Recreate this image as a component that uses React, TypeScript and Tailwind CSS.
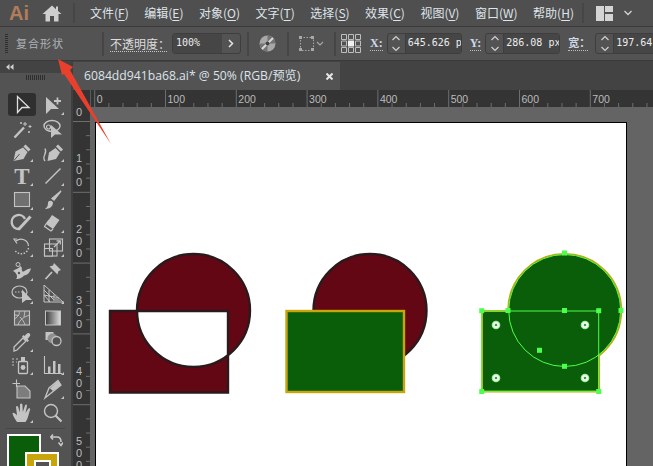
import type { ReactNode } from "react";

const uiFont = "font-['Noto_Sans_CJK_SC','Noto_Sans',sans-serif]";
const G = "#c4c4c4";

const menus = [
  ["文件(", "F", ")"],
  ["编辑(", "E", ")"],
  ["对象(", "O", ")"],
  ["文字(", "T", ")"],
  ["选择(", "S", ")"],
  ["效果(", "C", ")"],
  ["视图(", "V", ")"],
  ["窗口(", "W", ")"],
  ["帮助(", "H", ")"],
];

function Flyout() {
  return <polygon points="23,19 23,22 20,22" fill={G} />;
}

// toolbar icons, 24 box centred on the cell
const tools: { icon: ReactNode; fly?: boolean; active?: boolean }[] = [
  { active: true, icon: <path d="M7.5 3.5V19.5L12 14.5H19Z" fill="none" stroke="#e0e0e0" strokeWidth="1.3" /> },
  {
    fly: true,
    icon: (
      <>
        <path d="M5 4V21L10 16H18Z" fill={G} />
        <path d="M13 8H20M16.5 4.5V11.5" stroke={G} strokeWidth="1.8" />
      </>
    ),
  },
  {
    icon: (
      <>
        <path d="M4.5 20.5L14 10.5" stroke={G} strokeWidth="2.4" />
        <path d="M15 5v4M13 7h4M20 8v3M18.5 9.5h3M11 5v2M10 6h2M19 14v2M18 15h2" stroke={G} strokeWidth="1" />
      </>
    ),
  },
  {
    icon: (
      <>
        <ellipse cx="11" cy="9" rx="8" ry="5.5" fill="none" stroke={G} strokeWidth="1.4" />
        <circle cx="7.5" cy="10" r="2" fill="none" stroke={G} strokeWidth="1.2" />
        <path d="M10 8V21L14 17.5H21Z" fill={G} />
      </>
    ),
  },
  {
    fly: true,
    icon: (
      <>
        <path d="M3.5 21L5.5 11.5L13 7.5L17.5 12L13.5 19Z" fill={G} />
        <path d="M14.5 5.5L19.5 10.5" stroke={G} strokeWidth="3" />
        <path d="M4 20.5L9.5 14" stroke="#535353" strokeWidth="1" />
      </>
    ),
  },
  {
    fly: true,
    icon: (
      <>
        <path d="M6.5 21L8 12.5L14.5 8L19 12.5L15 19Z" fill={G} />
        <path d="M16 5.5L21 10.5" stroke={G} strokeWidth="3" />
        <path d="M4 21C0 16 7 14 4 8.5" fill="none" stroke={G} strokeWidth="1.3" />
      </>
    ),
  },
  {
    fly: true,
    icon: (
      <text x="12" y="20" textAnchor="middle" fontSize="23" fontWeight="700" fontFamily="'Liberation Serif',serif" fill={G}>
        T
      </text>
    ),
  },
  { fly: true, icon: <path d="M4.5 19.5L19.5 4.5" stroke={G} strokeWidth="1.5" /> },
  {
    fly: true,
    icon: <rect x="4.5" y="4.5" width="15" height="14" fill="#707070" stroke={G} strokeWidth="1.1" />,
  },
  {
    fly: true,
    icon: (
      <>
        <path d="M20 3L13 12L11 10.5Z" fill={G} stroke={G} strokeWidth="1.3" />
        <path d="M4 21C8 21 12 19 12 14.5C11 12 7 12 7 15C7 18 6 19 4 21Z" fill={G} />
      </>
    ),
  },
  {
    fly: true,
    icon: (
      <>
        <path d="M15 8A7 7 0 1 0 9 18" fill="none" stroke={G} strokeWidth="2.4" />
        <path d="M8.5 18.5L20.5 5.5" stroke={G} strokeWidth="3" />
      </>
    ),
  },
  {
    fly: true,
    icon: (
      <>
        <path d="M11 4L18.5 9L12 18L5 13Z" fill={G} />
        <path d="M5 13L8 9M5 13L3.5 15.5L10 20L12 18" fill="none" stroke={G} strokeWidth="1.2" />
      </>
    ),
  },
  {
    fly: true,
    icon: (
      <>
        <path d="M7 4H4L7 8.5" fill="none" stroke={G} strokeWidth="1.2" />
        <path d="M6 6C11 2 18 5 18.5 11" fill="none" stroke={G} strokeWidth="1.2" />
        <path d="M18.5 13A7.5 7.5 0 0 1 5 15.5" fill="none" stroke={G} strokeWidth="1.5" strokeDasharray="1.5 1.5" />
      </>
    ),
  },
  {
    fly: true,
    icon: (
      <>
        <rect x="3.5" y="9" width="12.5" height="12" fill="none" stroke={G} strokeWidth="1.1" />
        <rect x="3.5" y="13.5" width="8" height="7.5" fill="#535353" stroke={G} strokeWidth="1.1" />
        <rect x="8.5" y="4" width="13" height="12" fill="none" stroke={G} strokeWidth="1.1" />
        <path d="M13 12L19 6M15.5 5.8H19.3V9.5" fill="none" stroke={G} strokeWidth="1.2" />
      </>
    ),
  },
  {
    fly: true,
    icon: (
      <>
        <path d="M3 12C7 9 9 10 10 7C13 8 11 11 12.5 12.5C15 13 17 9 21 9.5C20 13 18 16 14 16.5C12 19 9 20.5 6 20C8 18 7 14 3 12Z" fill={G} />
        <circle cx="8" cy="5.5" r="2" fill="none" stroke={G} />
        <circle cx="9" cy="14" r="1.2" fill="#535353" />
      </>
    ),
  },
  {
    icon: (
      <>
        <path d="M13 4L20 11L17.5 12L16.5 15.5L8.5 7.5L12 6.5Z" fill={G} />
        <path d="M11 13L4.5 20" stroke={G} strokeWidth="1.8" />
      </>
    ),
  },
  {
    fly: true,
    icon: (
      <>
        <ellipse cx="9.5" cy="10" rx="7.5" ry="6" fill="none" stroke={G} strokeWidth="1.2" />
        <path d="M5 10H12" stroke={G} strokeWidth="1.2" strokeDasharray="1.5 1.5" />
        <path d="M12 7.5V21L16 18H22Z" fill={G} />
      </>
    ),
  },
  {
    fly: true,
    icon: (
      <>
        <path d="M3 3V20H22L3 3ZM3 8L15 20M3 13L9 20M8 8V20M13 12.5V20M3 13L18 16" fill="none" stroke={G} strokeWidth="1" />
        <path d="M14 14L21 20H12Z" fill="#8b8b8b" />
      </>
    ),
  },
  {
    icon: (
      <>
        <rect x="4.5" y="5" width="15" height="14" fill="#6a6a6a" stroke={G} strokeWidth="1.1" />
        <path d="M4.5 13C9 10 10 7 9 5M19.5 9C14 11 10 13 8 19M10 11C13 14 14 16 15 19M4.5 9L9 9.5M14 11L15 5" fill="none" stroke={G} strokeWidth="0.9" />
      </>
    ),
  },
  {
    icon: <rect x="4.5" y="5" width="15" height="14" fill="url(#toolgrad)" stroke={G} strokeWidth="1" />,
  },
  {
    fly: true,
    icon: (
      <>
        <path d="M4 21L4 17L13 8L16 11L7 20Z" fill="none" stroke={G} strokeWidth="1.3" />
        <path d="M12 6.5L17.5 12L19 10.5L17.5 9L20 6C21 4 19 2 17 3.5L14.5 6L13.5 5Z" fill={G} />
      </>
    ),
  },
  {
    icon: (
      <>
        <rect x="4.5" y="2" width="8" height="8" fill={G} />
        <circle cx="11.5" cy="8.5" r="5" fill="#8f8f8f" />
        <circle cx="15.5" cy="11" r="4.5" fill="#535353" stroke={G} strokeWidth="1.3" />
      </>
    ),
  },
  {
    fly: true,
    icon: (
      <>
        <rect x="8.5" y="8.5" width="9" height="12" rx="1" fill="none" stroke={G} strokeWidth="1.3" />
        <rect x="11" y="4" width="4" height="4" fill={G} />
        <circle cx="13" cy="14.5" r="2.4" fill={G} />
        <path d="M2 6h2M6 6h2M2 9h2M6 9h1M2 12h2" stroke="#9a9a9a" strokeWidth="1.6" />
      </>
    ),
  },
  {
    fly: true,
    icon: (
      <>
        <path d="M3.5 3V20.5H21" fill="none" stroke={G} strokeWidth="1.1" />
        <path d="M7 20V13.5H9.5V20ZM12 20V8H14.5V20ZM17 20V11H19.5V20Z" fill={G} />
      </>
    ),
  },
  {
    icon: (
      <>
        <path d="M2.5 6.5H10M6.5 2.5V10" stroke={G} strokeWidth="1.1" />
        <path d="M7 9H15L20 14V21H7Z" fill="#7d7d7d" stroke={G} strokeWidth="1.1" />
      </>
    ),
  },
  {
    fly: true,
    icon: (
      <>
        <path d="M4 21L8 11L17 3.5L20 8Z" fill="none" stroke={G} strokeWidth="1.3" />
        <path d="M9 11.5L17 3.5L20 8L12 14Z" fill={G} />
      </>
    ),
  },
  {
    fly: true,
    icon: (
      <path
        d="M7 21C5 18 3 15 2.5 12.5C3 11 5 12 7 14.5L6 6C6.5 4.5 8 5 8.3 6.5L9.8 11.5L10 3.5C10.5 2 12 2 12.4 3.5L12.8 11L15 4.5C15.5 3 17 3.5 17 5L15.5 12L18.5 7.5C19.5 6.8 20.5 7.5 20 9C18.5 13 18 18 15.5 21Z"
        fill={G}
      />
    ),
  },
  {
    icon: (
      <>
        <circle cx="10" cy="10" r="6.5" fill="none" stroke={G} strokeWidth="1.4" />
        <path d="M14.5 14.5L20.5 20.5" stroke={G} strokeWidth="2.2" />
      </>
    ),
  },
];

function ToolIcon({ icon, fly, active }: { icon: ReactNode; fly?: boolean; active?: boolean }) {
  return (
    <div className="flex items-center justify-center">
      <div className={`flex h-[23px] w-[28px] items-center justify-center rounded-[3px] ${active ? "bg-[#2f2f2f]" : ""}`}>
        <svg width="24" height="24" viewBox="0 0 24 24">
          {icon}
          {fly && <Flyout />}
        </svg>
      </div>
    </div>
  );
}

function Spinner({ value, className }: { value: string; className: string }) {
  return (
    <div className={`flex h-[21px] shrink-0 overflow-hidden rounded-[3px] border border-[#3e3e3e] ${className}`}>
      <div className="flex w-[18px] shrink-0 items-center justify-center border-r border-[#3e3e3e]">
        <svg width="10" height="17" viewBox="0 0 10 17" fill="none" stroke="#d0d0d0" strokeWidth="1.2">
          <path d="M1.5 5L5 1.5L8.5 5M1.5 12L5 15.5L8.5 12" />
        </svg>
      </div>
      <div className="flex-1 overflow-hidden whitespace-nowrap bg-[#464646] pl-[2px] font-['DejaVu_Sans_Mono',monospace] text-[10px] leading-[17px] text-[#ececec]">
        {value}
      </div>
    </div>
  );
}

function FieldLabel({ children, className }: { children: ReactNode; className: string }) {
  return (
    <span className={`shrink-0 whitespace-nowrap border-b border-dotted border-[#bdbdbd] font-['Liberation_Serif','Noto_Sans_CJK_SC',serif] font-bold leading-[14px] text-[#cfd8e4] ${className}`}>
      {children}
    </span>
  );
}

function Divider({ className }: { className: string }) {
  return <div className={`h-[24px] w-[2px] shrink-0 bg-[#464646] ${className}`} />;
}

function HorizontalRuler() {
  const majors = Array.from({ length: 8 }, (_, i) => i);
  return (
    <svg width="580" height="17" className="block bg-[#343434]">
      <path d="M17.5 0V17" stroke="#5a5a5a" />
      {majors.map((i) => {
        const x = 21.7 + i * 70.8;
        return (
          <g key={i}>
            <path d={`M${x} 0V17`} stroke="#6e6e6e" />
            {[1, 2, 3, 4].map((k) => (
              <path key={k} d={`M${x + k * 14.16} 13V17`} stroke="#6e6e6e" />
            ))}
            <text x={x + 2} y="13" fontSize="10.5" fill="#bcbcbc" fontFamily="'Liberation Sans',sans-serif">
              {i * 100}
            </text>
          </g>
        );
      })}
    </svg>
  );
}

function VerticalRuler() {
  const labels = [
    [100, 162],
    [200, 233],
    [300, 304],
    [400, 375],
    [500, 445],
  ];
  return (
    <svg width="17" height="359" className="block shrink-0 bg-[#343434]">
      {[0, 1, 2, 3, 4].map((i) => {
        const y = 14.5 + i * 70.8;
        return (
          <g key={i}>
            <path d={`M0 ${y}H17`} stroke="#6e6e6e" />
            {[1, 2, 3, 4].map((k) => (
              <path key={k} d={`M13 ${y + k * 14.16}H17`} stroke="#6e6e6e" />
            ))}
          </g>
        );
      })}
      <text x="3" y="9" fontSize="11" fill="#bcbcbc" fontFamily="'Liberation Sans',sans-serif">
        0
      </text>
      {labels.map(([v, y]) =>
        String(v)
          .split("")
          .map((d, j) => (
            <text key={`${v}-${j}`} x="3" y={y - 107 + j * 12} fontSize="11" fill="#bcbcbc" fontFamily="'Liberation Sans',sans-serif">
              {d}
            </text>
          )),
      )}
    </svg>
  );
}

function Artwork() {
  const handle = "#4dff4d";
  const squares = [
    [481.7, 310.7],
    [508, 310.5],
    [564.5, 310.5],
    [598.7, 310.7],
    [621, 310.5],
    [564.5, 253],
    [564.5, 366.3],
    [481.7, 391.5],
    [598.7, 391.5],
    [539.5, 350.3],
  ];
  const widgets = [
    [496, 325],
    [585, 325],
    [496, 378],
    [585, 378],
  ];
  return (
    <svg width="531" height="343" viewBox="96 123 531 343" className="block">
      {/* exclude */}
      <path
        d="M110 311H228V392.5H110ZM137 310.5A56.5 56.5 0 1 0 250 310.5A56.5 56.5 0 1 0 137 310.5Z"
        fill="#640714"
        fillRule="evenodd"
        stroke="#2a1a1c"
        strokeWidth="2.4"
      />
      {/* stacked */}
      <circle cx="370" cy="310.5" r="56.5" fill="#640714" stroke="#2a1a1c" strokeWidth="2.4" />
      <rect x="286.5" y="311" width="117.5" height="81" fill="#0b5e09" stroke="#c9a50c" strokeWidth="2.4" />
      {/* united + selected */}
      <circle cx="564.7" cy="310.5" r="56.5" fill="#0b5e09" stroke="#c9a50c" strokeWidth="2" />
      <rect x="482" y="311" width="117" height="80.5" fill="#0b5e09" stroke="#c9a50c" strokeWidth="2" />
      <circle cx="564.7" cy="310.5" r="56" fill="#0b5e09" />
      <circle cx="564.7" cy="310.5" r="56" fill="none" stroke={handle} strokeWidth="1" />
      <rect x="481.7" y="311" width="117" height="80.5" fill="none" stroke={handle} strokeWidth="1" />
      {squares.map(([x, y]) => (
        <rect key={`${x}-${y}`} x={x - 2.5} y={y - 2.5} width="5" height="5" fill={handle} />
      ))}
      {widgets.map(([x, y]) => (
        <g key={`${x}-${y}`}>
          <circle cx={x} cy={y} r="4.3" fill="#9cf59c" />
          <circle cx={x} cy={y} r="3" fill="#ffffff" />
          <circle cx={x} cy={y} r="1.3" fill="#3f9a3f" />
        </g>
      ))}
    </svg>
  );
}

export default function App() {
  return (
    <div className={`relative flex h-[466px] w-[653px] flex-col overflow-hidden bg-[#535353] ${uiFont}`}>
      {/* menu bar */}
      <header className="flex h-[27px] shrink-0 items-center border-b border-[#3a3a3a] bg-[#4f4f4f]">
        <span className="ml-[9px] w-[20px] font-['Liberation_Sans',sans-serif] text-[20px] font-bold leading-none text-[#b07d5c]">Ai</span>
        <svg width="20" height="17" viewBox="0 0 20 17" className="ml-[13px]" fill="#cfcfcf">
          <path d="M10 0.5L0.5 9H3.5V16.5H8V11H12V16.5H16.5V9H19.5L16 6V1.5H14V4.2Z" />
        </svg>
        <div className="ml-[11px] h-[20px] w-[2px] bg-[#464646]" />
        <nav className="ml-[15px] flex items-center gap-[15.5px] text-[12px] leading-none text-[#dfe4ea]">
          {menus.map(([a, k, b]) => (
            <span key={k} className="whitespace-nowrap">
              {a}
              <span className="underline underline-offset-2">{k}</span>
              {b}
            </span>
          ))}
        </nav>
        <div className="ml-auto mr-[21px] flex items-center gap-[10px]">
          <div className="h-[20px] w-[2px] bg-[#464646]" />
          <svg width="17" height="15" viewBox="0 0 17 15" className="ml-[2px]" fill="#d4d4d4">
            <path d="M0 0H8V15H0ZM9 0H17V6H9ZM9 8H17V15H9Z" />
          </svg>
          <svg width="8" height="6" viewBox="0 0 8 6" className="ml-[1px]" fill="none" stroke="#d4d4d4" strokeWidth="1.3">
            <path d="M0.5 1L4 4.5L7.5 1" />
          </svg>
        </div>
      </header>

      {/* control bar */}
      <div className="flex h-[34px] shrink-0 items-center border-b border-[#3a3a3a] bg-[#535353]">
        <div className="ml-[5px] h-[19px] w-[3px] shrink-0 border-y-0 bg-[repeating-linear-gradient(to_bottom,#2f2f2f_0,#2f2f2f_1px,transparent_1px,transparent_2px)]" />
        <span className="ml-[8px] w-[54px] shrink-0 whitespace-nowrap text-[11px] leading-none tracking-[1px] text-[#adb3b8]">复合形状</span>
        <Divider className="ml-[32px]" />
        <span className="ml-[6px] w-[57px] shrink-0 whitespace-nowrap border-b border-dotted border-[#c8c8c8] text-[12px] leading-[15px] text-[#dcdcdc]">不透明度：</span>
        <div className="ml-[5px] flex h-[21px] w-[69px] shrink-0 overflow-hidden rounded-[3px] border border-[#3e3e3e]">
          <div className="flex-1 bg-[#464646] pl-[3px] font-['DejaVu_Sans_Mono',monospace] text-[10px] leading-[17px] text-[#ececec]">100%</div>
          <div className="flex w-[18px] items-center justify-center">
            <svg width="6" height="9" viewBox="0 0 6 9" fill="none" stroke="#e4e4e4" strokeWidth="1.5">
              <path d="M1 1L4.5 4.5L1 8" />
            </svg>
          </div>
        </div>
        <Divider className="ml-[6px]" />
        <svg width="17" height="17" viewBox="0 0 17 17" className="ml-[10px] shrink-0">
          <circle cx="8.5" cy="8.5" r="8" fill="#a8a8a8" />
          <path d="M8.5 8.5L8.5 .5A8 8 0 0 1 16.5 8.5ZM8.5 8.5V16.5A8 8 0 0 1 .5 8.5Z" fill="#747474" />
          <path d="M8.5 8.5L14 3M8.5 8.5L3 14" stroke="#d8d8d8" strokeWidth="2" />
          <circle cx="8.5" cy="8.5" r="2" fill="#444" />
        </svg>
        <Divider className="ml-[11px]" />
        <svg width="25" height="16" viewBox="0 0 25 16" className="ml-[10px] shrink-0" fill="none">
          <rect x="1.5" y="1.5" width="13" height="13" stroke="#a8a8a8" strokeDasharray="1.5 1.5" />
          <path d="M0 0h3v3h-3zM12 0h3v3h-3zM0 12h3v3h-3zM12 12h3v3h-3z" fill="#a8a8a8" />
          <path d="M18 6L21 9L24 6" stroke="#a8a8a8" strokeWidth="1.1" />
        </svg>
        <Divider className="ml-[10px]" />
        <svg width="20" height="19" viewBox="0 0 20 19" className="ml-[5px] shrink-0" fill="none" stroke="#bdbdbd">
          <path d="M.5 .5h5v5h-5zM7.5 .5h5v5h-5zM14.5 .5h5v5h-5zM.5 7h5v5h-5zM14.5 7h5v5h-5zM.5 13.5h5v5h-5zM7.5 13.5h5v5h-5zM14.5 13.5h5v5h-5z" />
          <rect x="7.5" y="7" width="5" height="5" fill="#f0f0f0" stroke="#f0f0f0" />
        </svg>
        <FieldLabel className="ml-[9px] text-[12px]">X:</FieldLabel>
        <Spinner value="645.626 p" className="ml-[4px] w-[75px]" />
        <FieldLabel className="ml-[8px] text-[12px]">Y:</FieldLabel>
        <Spinner value="286.08 px" className="ml-[4px] w-[75px]" />
        <FieldLabel className="ml-[8px] w-[20px] text-[11px]">宽：</FieldLabel>
        <Spinner value="197.64" className="ml-[7px] w-[70px]" />
      </div>

      <div className="flex min-h-0 flex-1">
        {/* tools */}
        <aside className="w-[73px] shrink-0 border-r-2 border-[#3f3f3f] bg-[#535353]">
          <svg width="0" height="0" className="absolute">
            <defs>
              <linearGradient id="toolgrad" x1="0" x2="1" y1="0" y2="0">
                <stop offset="0" stopColor="#3a3a3a" />
                <stop offset="1" stopColor="#dedede" />
              </linearGradient>
            </defs>
          </svg>
          <div className="flex h-[12px] items-center bg-[#434343] pl-[6px]">
            <svg width="8" height="6" viewBox="0 0 8 6" fill="#d0d0d0">
              <path d="M3.5 0V6L0 3ZM7.5 0V6L4 3Z" />
            </svg>
          </div>
          <div className="mx-auto mt-[2px] h-[5px] w-[19px] bg-[repeating-linear-gradient(to_right,#2f2f2f_0,#2f2f2f_1px,transparent_1px,transparent_2px)]" />
          <div className="ml-[6px] mt-[13px] grid grid-cols-[31px_31px] auto-rows-[23.7px]">
            {tools.map((t, i) => (
              <ToolIcon key={i} icon={t.icon} fly={t.fly} active={t.active} />
            ))}
          </div>
          <div className="mx-[6px] mt-[3px] h-px bg-[#474747]" />
          <div className="relative ml-[7px] mt-[5px] h-[40px]">
            <div className="h-[34px] w-[34px] border-2 border-white bg-[#0b5e09]" />
            <div className="absolute left-[18px] top-[18px] flex h-[34px] w-[34px] justify-center border-2 border-white bg-[#c9a50c] pt-[6px]">
              <div className="h-[17px] w-[17px] border-2 border-white bg-[#535353]" />
            </div>
            <svg width="13" height="13" viewBox="0 0 13 13" className="absolute left-[43px] top-0" fill="none" stroke="#c8c8c8" strokeWidth="1.6">
              <path d="M1 3H7C10 3 11 5 11 8M3 .5L.8 3L3 5.5M8.5 8.5L11 11.5L13 8.5" />
            </svg>
          </div>
        </aside>

        <main className="flex min-w-0 flex-1 flex-col">
          {/* tab */}
          <div className="flex h-[29px] shrink-0 bg-[#434343] pt-px">
            <div className="flex w-[267px] items-center bg-[#535353] pl-[11px] font-['Open_Sans','Noto_Sans_CJK_SC',sans-serif] text-[12.2px] leading-none text-[#dde3ea]">
              <span className="whitespace-nowrap">6084dd941ba68.ai* @ 50% (RGB/预览)</span>
              <svg width="7" height="7" viewBox="0 0 7 7" className="ml-auto mr-[7px]" stroke="#e6e6e6" strokeWidth="2">
                <path d="M.5 .5L6.5 6.5M6.5 .5L.5 6.5" />
              </svg>
            </div>
          </div>
          <HorizontalRuler />
          <div className="flex min-h-0 flex-1">
            <VerticalRuler />
            <div className="flex-1 bg-[#646464] pl-[5px] pt-[15px]">
              <div className="h-[360px] w-[532px] border border-black bg-white">
                <Artwork />
              </div>
            </div>
          </div>
        </main>
      </div>

      {/* red annotation arrow */}
      <svg width="653" height="466" viewBox="0 0 653 466" className="pointer-events-none absolute left-0 top-0">
        <polygon points="58,59 73,67 70,70 111,144 64,74 62,75" fill="#e8402c" />
      </svg>
    </div>
  );
}
